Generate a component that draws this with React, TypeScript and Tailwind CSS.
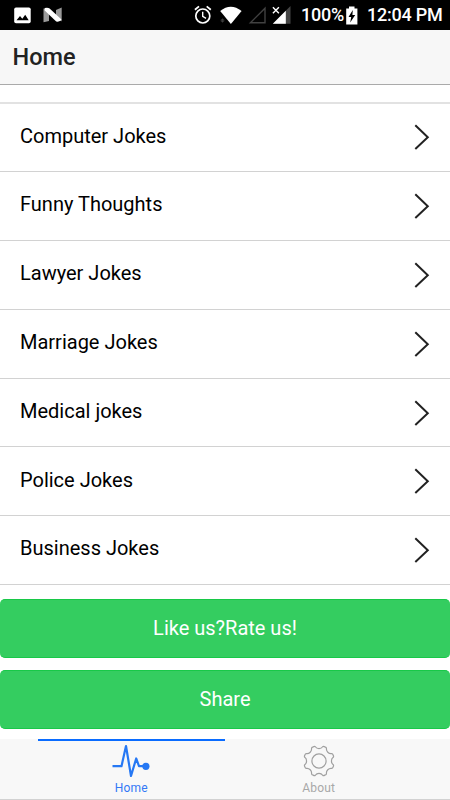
import React from "react";

const categories = [
  "Computer Jokes",
  "Funny Thoughts",
  "Lawyer Jokes",
  "Marriage Jokes",
  "Medical jokes",
  "Police Jokes",
  "Business Jokes",
];

function point(radius: number, degrees: number) {
  const a = (degrees * Math.PI) / 180;
  return `${(16 + radius * Math.cos(a)).toFixed(2)} ${(16 + radius * Math.sin(a)).toFixed(2)}`;
}

// Eight rounded teeth joined by scalloped notches.
function gearPath() {
  let d = `M${point(14.7, 14.5)}`;
  for (let i = 0; i < 8; i++) {
    const c = 22.5 + i * 45;
    d += `Q${point(15.6, c - 6)} ${point(15.3, c)}`;
    d += `Q${point(15.6, c + 6)} ${point(14.7, c + 8)}`;
    d += `C${point(12, c + 13)} ${point(12, c + 32)} ${point(14.7, c + 37)}`;
  }
  return d + "Z";
}

function StatusBar() {
  return (
    <div className="flex h-[30px] shrink-0 items-center bg-black text-white">
      <svg className="ml-[14px] shrink-0" width="17" height="17" viewBox="0 0 17 17">
        <rect x="0.2" y="0.5" width="16.5" height="15.8" rx="1.8" fill="#fff" />
        <path d="M2.5 13.3 6 9l2.3 2.7L11.2 7.8l3.5 5.5Z" fill="#000" />
      </svg>
      <svg className="ml-[12px] shrink-0" width="20" height="16" viewBox="0 0 20 16">
        <path d="M.5 1.4 6 2.5v11.4L.5 15.2Z" fill="#999" />
        <path d="M13 3 18.7.6v13.6L13 13Z" fill="#999" />
        <path d="M1.7 1Q5 .2 6.6 1.5L18.5 12.5Q17 15.2 13.2 14.5L1.7 3.6Z" fill="#fff" />
      </svg>
      <svg className="ml-[131px] shrink-0" width="18" height="20" viewBox="0 0 18 20" fill="none" stroke="#fff">
        <circle cx="8.8" cy="11" r="7" strokeWidth="1.7" />
        <path d="M8.7 6.8v4.6l3.3 2" strokeWidth="1.4" />
        <path d="M.9 4.7 5 1.4M12.7 1.4 16.8 4.7" strokeWidth="1.8" />
      </svg>
      <svg className="ml-[7px] shrink-0" width="24" height="20" viewBox="0 0 24 20">
        <path d="M1.2 6Q11.7-2.5 22.6 6L11.9 19Z" fill="#fff" />
        <path d="M3.5 13.5v4M2.2 14.7h2.6v1.6H2.2Z" stroke="#444" strokeWidth=".8" fill="none" />
      </svg>
      <svg className="ml-[5px] shrink-0" width="19" height="20" viewBox="0 0 19 20">
        <path d="M2.4 17.7H17V3.2Z" fill="none" stroke="#414141" strokeWidth="1.4" />
      </svg>
      <svg className="ml-[5px] shrink-0" width="20" height="20" viewBox="0 0 20 20">
        <path d="M.8 18.8 18.5 1v17.8Z" fill="#444" />
        <path d="M.8 18.8 13.8 5.7v13.1Z" fill="#fff" />
        <path d="M0 1.2h7.8v8H0Z" fill="#000" />
        <path d="m.9 2.2 6 6M6.9 2.2l-6 6" stroke="#fff" strokeWidth="1.4" />
      </svg>
      <span className="ml-[9px] w-[43px] shrink-0 whitespace-nowrap text-[18px] leading-[30px] font-medium tracking-[-0.2px]">100%</span>
      <svg className="ml-[2px] shrink-0" width="12" height="19" viewBox="0 0 12 19">
        <path d="M.2 2.5H3V.5h5.5v2h2.9v16H.2Z" fill="#fff" />
        <path d="M6.8 4 2.5 11h2.7L4.2 16.5 9.2 9H6.4Z" fill="#000" />
      </svg>
      <span className="ml-[9px] whitespace-nowrap text-[18px] leading-[30px] font-medium tracking-[-0.25px]">12:04 PM</span>
    </div>
  );
}

function Chevron() {
  return (
    <svg width="18" height="28" viewBox="0 0 18 28" fill="none" stroke="#222" strokeWidth="2">
      <path d="M2.3 2.3 14.8 14.2 2.3 26" />
    </svg>
  );
}

export default function App() {
  return (
    <div className="flex h-[800px] w-[450px] flex-col overflow-hidden bg-white font-['Roboto',sans-serif]">
      <StatusBar />
      <header className="flex h-[55px] shrink-0 items-center border-b border-[#aaa] bg-[#f7f7f7] pl-[12.5px]">
        <h1 className="text-[23.5px] leading-[54px] font-medium text-[#222]">Home</h1>
      </header>
      <main className="flex flex-1 flex-col pt-[16.5px]">
        <ul className="border-t-2 border-[#e2e2e2]">
          {categories.map((name) => (
            <li key={name} className="flex h-[68.8px] items-center justify-between border-b border-[#d2d2d2] pr-[19.5px] pl-5">
              <span className="-mt-[3.6px] text-[20px] leading-6 text-black">{name}</span>
              <Chevron />
            </li>
          ))}
        </ul>
        <button className="mt-[13.7px] h-[59px] shrink-0 rounded-[5px] border-y border-[#18c848] bg-[#34cd60] text-[20px] text-white">
          Like us?Rate us!
        </button>
        <button className="mt-[12px] h-[59px] shrink-0 rounded-[5px] border-y border-[#18c848] bg-[#34cd60] text-[20px] text-white">
          Share
        </button>
      </main>
      <nav className="flex h-[61px] shrink-0 justify-center border-b border-[#d2d2d2] bg-[#f8f8f8]">
        <a className="flex w-[187.5px] flex-col items-center border-t-[2px] border-[#0a6cff] text-[#3478f6]">
          <svg className="mt-[2px]" width="40" height="36" viewBox="0 0 40 36" fill="none" stroke="#2678f4" strokeWidth="2.2" strokeLinejoin="round">
            <path d="M1.5 23.2h9L15 3l5 30 5.2-17.5 2.8 7.7h7" />
            <circle cx="34.9" cy="23.3" r="3.6" fill="#2678f4" stroke="none" />
          </svg>
          <span className="mt-px text-[12px] leading-4 tracking-[0.2px]">Home</span>
        </a>
        <a className="flex w-[187.5px] flex-col items-center pt-[6px] text-[#a8a8a8]">
          <svg width="32" height="32" viewBox="0 0 32 32" fill="none" stroke="#a0a0a0" strokeWidth="1.2">
            <path d={gearPath()} />
            <circle cx="16" cy="16" r="7.1" />
          </svg>
          <span className="mt-[3px] text-[12px] leading-4 tracking-[0.2px]">About</span>
        </a>
      </nav>
    </div>
  );
}
